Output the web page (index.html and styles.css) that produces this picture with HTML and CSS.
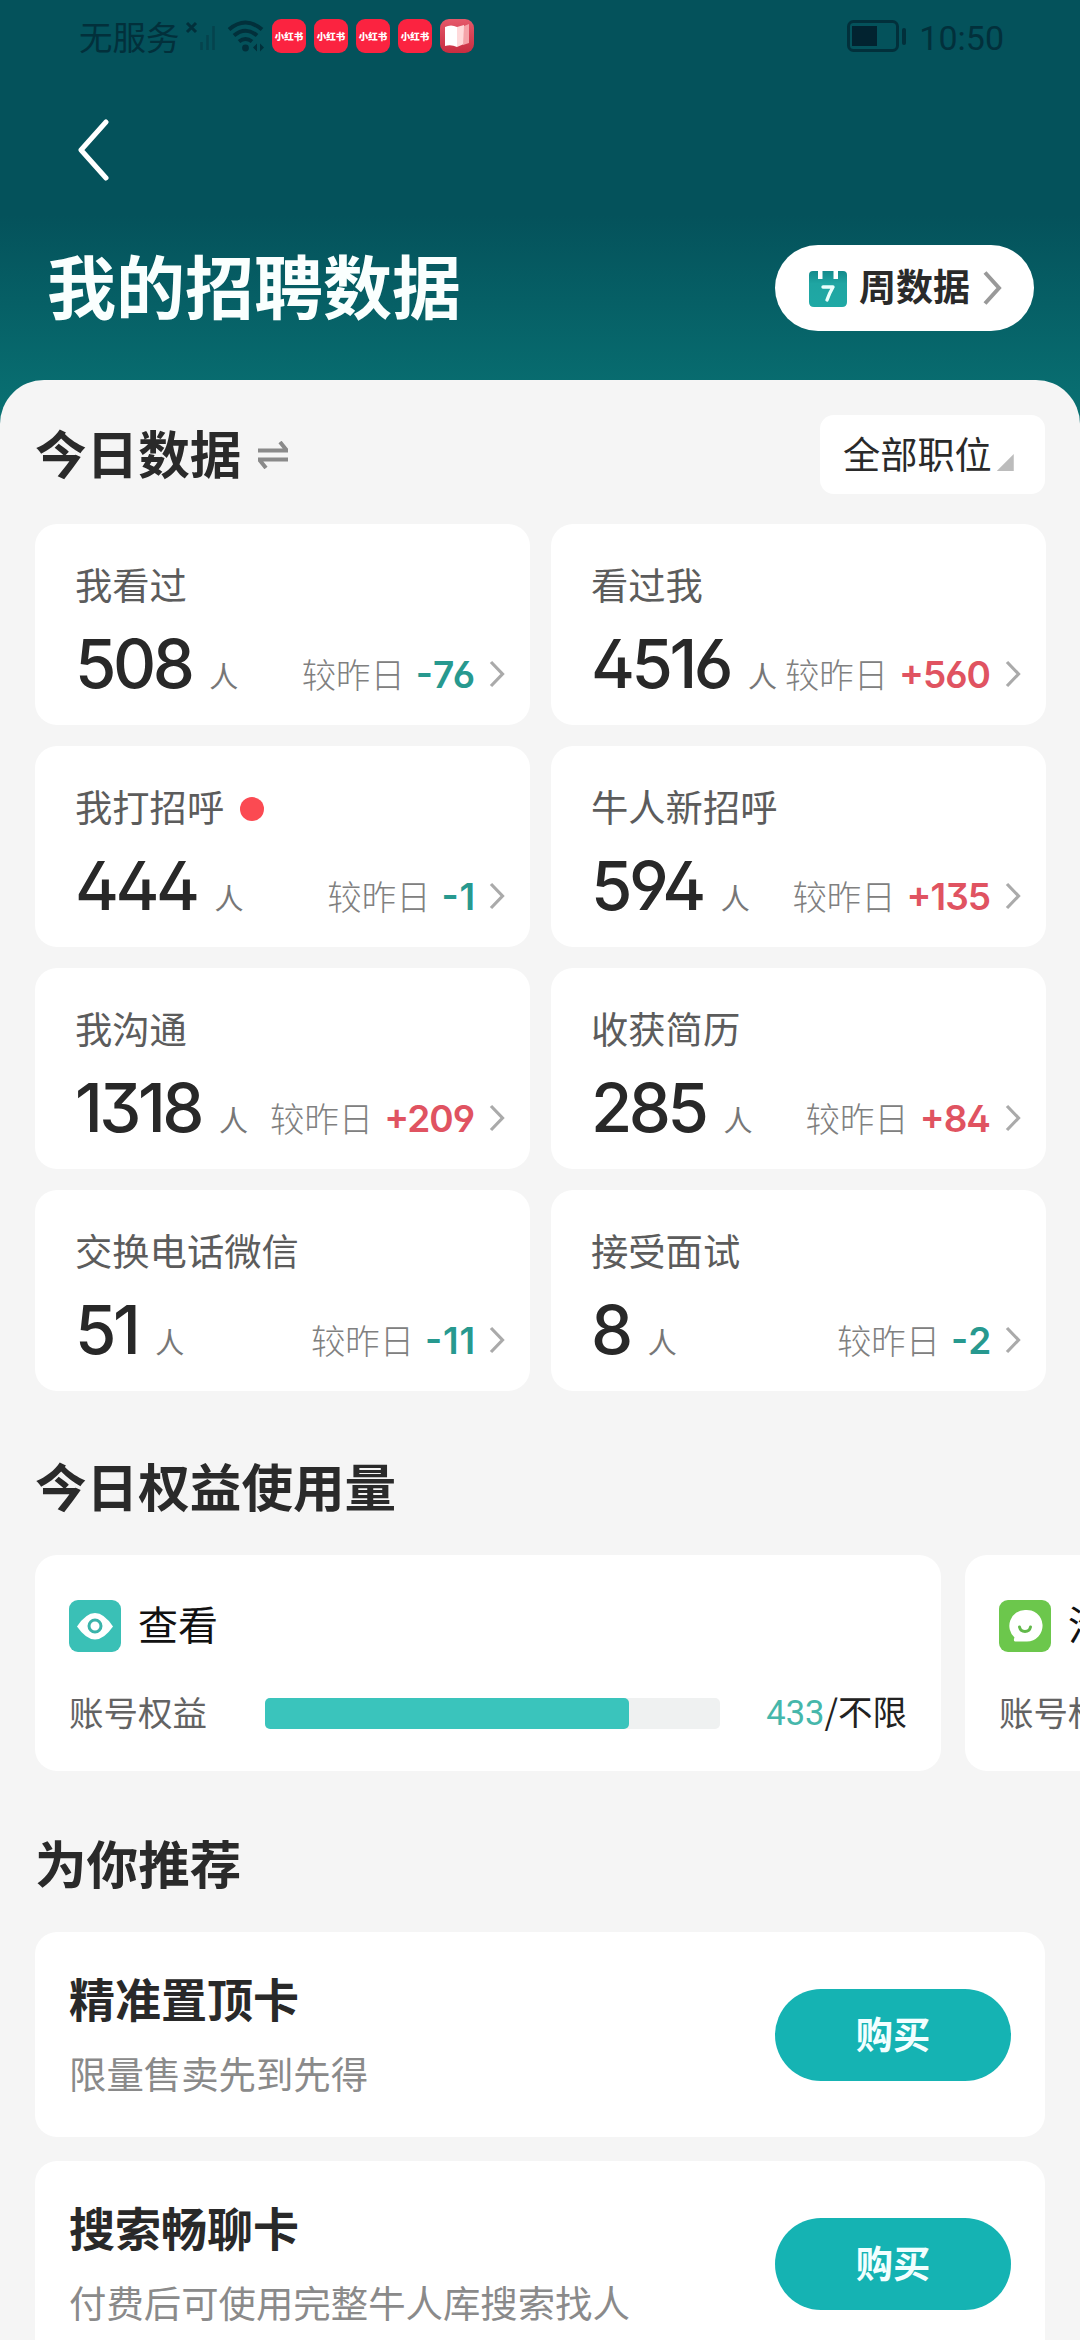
FILE: index.html
```html
<!DOCTYPE html>
<html lang="zh-CN">
<head>
<meta charset="utf-8">
<title>我的招聘数据</title>
<link rel="stylesheet" href="styles.css">
</head>
<body>
<svg class="defs" width="0" height="0">
  <symbol id="chev" viewBox="0 0 16 28"><path d="M2 2 L13.5 14 L2 26" fill="none" stroke="currentColor" stroke-width="3.2"/></symbol>
</svg>
<div class="screen">
  <header class="top">
    <div class="status">
      <span class="carrier">无服务</span>
      <svg class="signal" width="34" height="36" viewBox="0 0 34 36">
        <path d="M4 5l9 9M13 5l-9 9" stroke="#02303b" stroke-width="3"/>
        <path d="M18.500 32v-8M24.500 32v-15M30.500 32V8" stroke="#05434d" stroke-width="2.500"/>
      </svg>
      <svg class="wifi" width="38" height="34" viewBox="0 0 38 34">
        <g fill="none" stroke="#02303b" stroke-width="4"><path d="M2 10.500Q18.500-3.500 35 10.500"/><path d="M7 16.500Q18.500 7 30 16.500"/><path d="M12 22.500Q18.500 17.500 25 22.500"/></g>
        <circle cx="18.500" cy="29" r="3.400" fill="#02303b"/>
        <path d="M30 24.500v8l-4-4zM33 24.500v8l4-4z" fill="#02303b"/>
      </svg>
      <div class="apps">
        <span class="app">小红书</span><span class="app">小红书</span><span class="app">小红书</span><span class="app">小红书</span>
        <span class="app book"><svg width="26" height="24" viewBox="0 0 26 24"><path d="M1 3Q7 0 13 3V23Q7 20 1 22z" fill="#fff"/><path d="M13 3L20 1V20L13 23z" fill="#ffd9da"/><path d="M20 2L25 0V19L19 21z" fill="#f5a3a9"/></svg></span>
      </div>
      <svg class="battery" width="60" height="32" viewBox="0 0 60 32">
        <rect x="1.500" y="1.500" width="49" height="29" rx="5" fill="none" stroke="#02303b" stroke-width="3"/>
        <rect x="5" y="6" width="25" height="20" fill="#022330"/>
        <rect x="55" y="8" width="4" height="17" rx="2" fill="#02303b"/>
      </svg>
      <span class="time">10:50</span>
    </div>
    <nav class="nav">
      <svg width="34" height="62" viewBox="0 0 34 62"><path d="M29 3L4 31L29 59" fill="none" stroke="#fff" stroke-width="5" stroke-linecap="round" stroke-linejoin="round"/></svg>
    </nav>
    <div class="hero">
      <h1>我的招聘数据</h1>
      <div class="week">
        <svg width="38" height="37" viewBox="0 0 38 37">
          <defs><linearGradient id="cal" x1="0" y1="0" x2="0" y2="1"><stop offset="0" stop-color="#138a8b"/><stop offset=".35" stop-color="#1fa5a2"/><stop offset="1" stop-color="#1fa9a5"/></linearGradient></defs>
          <path d="M4 1H9V9H13.500V1H24.500V9H29V1H34Q38 1 38 5V32Q38 37 33 37H5Q0 37 0 32V5Q0 1 4 1z" fill="url(#cal)"/>
          <path d="M14 17H24Q20.500 23 18 30" fill="none" stroke="#e9fffc" stroke-width="3.400" stroke-linecap="round" stroke-linejoin="round"/>
        </svg>
        <span>周数据</span>
        <svg class="week-chev" width="19" height="34" viewBox="0 0 19 34"><path d="M2 1.500L16 17L2 32.500" fill="none" stroke="currentColor" stroke-width="4"/></svg>
      </div>
    </div>
  </header>

  <main class="sheet">
    <div class="head">
      <h2>今日数据</h2>
      <svg width="30" height="28" viewBox="0 0 30 28"><path d="M0 9.500H30M22 1L28.500 9M0 18.500H30M8 27L1.500 19" fill="none" stroke="#8a8a8a" stroke-width="4"/></svg>
      <div class="filter"><span>全部职位</span><i></i></div>
    </div>

    <section class="grid">
      <article class="stat"><div class="label">我看过</div><div class="row"><b>508</b><small>人</small><span class="cmp">较昨日</span><em class="down">-76</em><svg><use href="#chev"/></svg></div></article>
      <article class="stat"><div class="label">看过我</div><div class="row"><b>4516</b><small>人</small><span class="cmp">较昨日</span><em class="up">+560</em><svg><use href="#chev"/></svg></div></article>
      <article class="stat"><div class="label">我打招呼<i class="dot"></i></div><div class="row"><b>444</b><small>人</small><span class="cmp">较昨日</span><em class="down">-1</em><svg><use href="#chev"/></svg></div></article>
      <article class="stat"><div class="label">牛人新招呼</div><div class="row"><b>594</b><small>人</small><span class="cmp">较昨日</span><em class="up">+135</em><svg><use href="#chev"/></svg></div></article>
      <article class="stat"><div class="label">我沟通</div><div class="row"><b>1318</b><small>人</small><span class="cmp">较昨日</span><em class="up">+209</em><svg><use href="#chev"/></svg></div></article>
      <article class="stat"><div class="label">收获简历</div><div class="row"><b>285</b><small>人</small><span class="cmp">较昨日</span><em class="up">+84</em><svg><use href="#chev"/></svg></div></article>
      <article class="stat"><div class="label">交换电话微信</div><div class="row"><b>51</b><small>人</small><span class="cmp">较昨日</span><em class="down">-11</em><svg><use href="#chev"/></svg></div></article>
      <article class="stat"><div class="label">接受面试</div><div class="row"><b>8</b><small>人</small><span class="cmp">较昨日</span><em class="down">-2</em><svg><use href="#chev"/></svg></div></article>
    </section>

    <h2 class="title usage-title">今日权益使用量</h2>
    <section class="usage">
      <article class="quota">
        <div class="quota-name">
          <svg width="52" height="52" viewBox="0 0 52 52"><rect width="52" height="52" rx="9" fill="#3ac0b6"/><path d="M8 26.500Q17 13 26 13T44 26.500Q35 39.500 26 39.500T8 26.500z" fill="#fff"/><circle cx="26" cy="26" r="6" fill="none" stroke="#3ab3aa" stroke-width="3"/></svg>
          <span>查看</span>
        </div>
        <div class="quota-row">
          <span class="quota-label">账号权益</span>
          <div class="bar"><div class="fill" style="width:80%"></div></div>
          <span class="quota-val"><em>433</em>/不限</span>
        </div>
      </article>
      <article class="quota">
        <div class="quota-name">
          <svg width="52" height="52" viewBox="0 0 52 52"><rect width="52" height="52" rx="9" fill="#6cc74c"/><path d="M26 10A15.800 15.800 0 1 1 28 41.500H16Q14 41 15.500 37.500A15.800 15.800 0 0 1 26 10z" fill="#fff"/><path d="M20.500 27Q21.500 31.500 26 31.500T31.500 27" fill="none" stroke="#62b94a" stroke-width="3" stroke-linecap="round"/></svg>
          <span>沟通</span>
        </div>
        <div class="quota-row">
          <span class="quota-label">账号权益</span>
          <div class="bar"></div>
        </div>
      </article>
    </section>

    <h2 class="title rec-title">为你推荐</h2>
    <section class="recs">
      <article class="rec"><div><h3>精准置顶卡</h3><p>限量售卖先到先得</p></div><button>购买</button></article>
      <article class="rec"><div><h3>搜索畅聊卡</h3><p>付费后可使用完整牛人库搜索找人</p></div><button>购买</button></article>
    </section>
  </main>
</div>
</body>
</html>
```
FILE: styles.css
```css
* { box-sizing: border-box; margin: 0; padding: 0; }
body {
  width: 1080px;
  height: 2340px;
  overflow: hidden;
  font-family: "Noto Sans CJK SC", sans-serif;
  color: #2a2a2a;
}
.defs { display: block; }
.screen {
  width: 1080px;
  height: 2340px;
  overflow: hidden;
  background: linear-gradient(#04525b 0, #04525b 215px, #086d70 390px, #0a7374 430px);
}
svg { flex: none; display: block; }
em, i { font-style: normal; }

/* header */
.top { height: 380px; }
.status { display: flex; align-items: center; height: 72px; padding: 0 76px 0 79px; }
.carrier { width: 104px; font-size: 33.500px; line-height: 40px; color: #02303b; font-weight: 400; }
.signal { margin-right: 10px; }
.wifi { margin-right: 7px; }
.apps { display: flex; gap: 8px; }
.app {
  display: flex; align-items: center; justify-content: center;
  width: 34px; height: 34px; border-radius: 9px;
  background: #fb2340; color: #fff;
  font-size: 9.500px; font-weight: 900; white-space: nowrap;
}
.book { background: linear-gradient(#e5596a, #c82c40); }
.battery { margin-left: auto; }
.time { margin: 3px 0 0 12px; font: 400 34px/40px Roboto, sans-serif; color: #02303b; }
.nav { height: 156px; padding: 47px 0 0 77px; }
.hero { display: flex; align-items: center; justify-content: space-between; height: 120px; padding: 0 46px 0 47px; }
h1 { padding-bottom: 8px; font-size: 69px; line-height: 80px; font-weight: 700; color: #fafffe; }
.week {
  display: flex; align-items: center;
  width: 259px; height: 86px; padding: 0 32px 0 34px; border-radius: 43px;
  background: #fff; font-size: 37px; font-weight: 700;
}
.week span { margin: 0 auto 0 12px; padding-bottom: 6px; line-height: 44px; }
.week-chev { color: #999; }

/* content sheet */
.sheet { height: 1960px; padding: 35px 35px 0; border-radius: 44px 44px 0 0; background: #f5f5f5; overflow: hidden; }
h2 { font-size: 51.600px; line-height: 60px; font-weight: 700; color: #2a2a2a; }
.head { display: flex; align-items: center; height: 79px; margin-bottom: 30px; }
.head > svg { margin-left: 17px; }
.head h2 { padding-bottom: 5px; }
.filter {
  display: flex; align-items: center;
  width: 225px; height: 79px; margin-left: auto; padding-left: 23px; border-radius: 14px;
  background: #fff; font-size: 37.200px; line-height: 44px;
}
.filter span { padding-bottom: 4px; }
.filter i { width: 17px; height: 17px; margin: 16px 0 0 5px; background: #bcbcbc; clip-path: polygon(100% 0, 100% 100%, 0 100%); }

.grid { display: grid; grid-template-columns: 495px 495px; gap: 21px; margin-right: -1px; }
.stat { height: 201px; padding: 38px 25px 0 40px; border-radius: 22px; background: #fff; }
.label { display: flex; align-items: center; font-size: 37.300px; line-height: 44px; color: #5c5c5c; }
.dot { width: 24px; height: 24px; margin: 6px 0 0 16px; border-radius: 50%; background: #fb4a52; }
.row { display: flex; align-items: baseline; margin-top: 28px; white-space: nowrap; }
.row b { font: 500 67px/60px Inter, sans-serif; font-feature-settings: "cv02", "cv03", "cv04", "cv09"; letter-spacing: -3.500px; color: #282828; }
.row small { margin-left: 18px; font-size: 29px; line-height: 40px; color: #777; }
.cmp { margin-left: auto; font-size: 34.400px; line-height: 44px; font-weight: 300; color: #808080; }
.row em { margin-left: 11px; font: 600 37px/44px Inter, sans-serif; font-feature-settings: "case", "cv02", "cv03", "cv04", "cv09"; letter-spacing: -1px; }
.row .up { color: #e05361; }
.row .down { color: #27998f; letter-spacing: .8px; }
.row svg { width: 16px; height: 28px; margin-left: 15px; color: #aaa; }
.row .down + svg { margin-left: 13px; }

.title { margin-bottom: 40px; }
.usage-title { margin-top: 64px; }
.rec-title { margin-top: 61px; }
.usage { display: flex; gap: 24px; }
.quota { flex: none; width: 906px; height: 216px; padding: 45px 34px 0 34px; border-radius: 22px; background: #fff; }
.quota-name { display: flex; align-items: center; height: 52px; font-size: 40px; color: #111; }
.quota-name span { margin-left: 17px; line-height: 52px; padding-bottom: 6px; }
.quota-row { display: flex; align-items: center; height: 44px; margin-top: 39px; font-size: 34.500px; line-height: 44px; }
.quota-label { width: 196px; color: #636363; padding-bottom: 4px; }
.bar { width: 455px; height: 31px; border-radius: 5px; background: #eff1f1; margin-top: 1px; }
.fill { height: 31px; border-radius: 5px; background: #3ac4bc; }
.quota-val { margin-left: auto; padding-bottom: 3px; color: #222; white-space: nowrap; }
.quota-val em { font-family: Roboto, sans-serif; color: #46b7ab; }

.recs { display: flex; flex-direction: column; gap: 24px; }
.rec { display: flex; justify-content: space-between; height: 205px; padding: 37px 34px 0 34px; border-radius: 22px; background: #fff; }
h3 { font-size: 46px; line-height: 56px; font-weight: 700; color: #292929; }
.rec p { margin-top: 26px; font-size: 37.400px; line-height: 44px; color: #8a8a8a; }
.rec button {
  width: 236px; height: 92px; margin-top: 20px; padding-bottom: 5px; border: 0; border-radius: 46px;
  background: #15b3b3; color: #f2ffff;
  font: 700 37.300px/44px "Noto Sans CJK SC", sans-serif;
}
```
